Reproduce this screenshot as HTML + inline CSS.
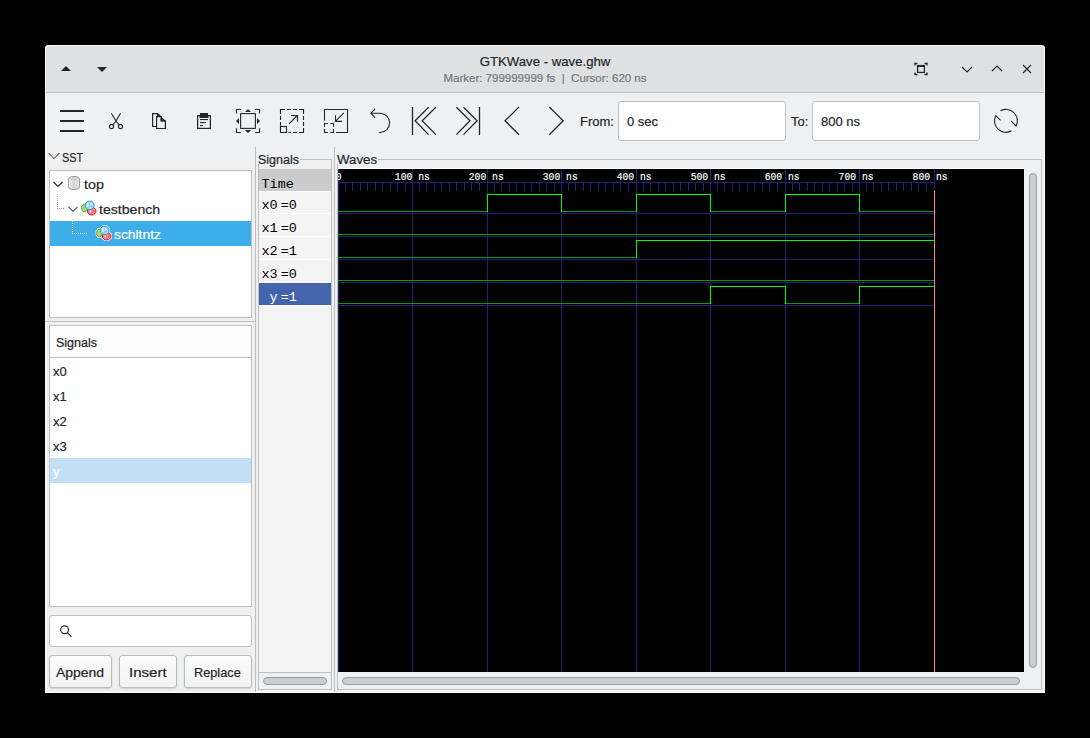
<!DOCTYPE html>
<html><head><meta charset="utf-8">
<style>
html,body{margin:0;padding:0;background:#000;width:1090px;height:738px;overflow:hidden;position:relative}
*{box-sizing:border-box}
.a{position:absolute}
.t{font-family:"Liberation Sans",sans-serif;color:#232629;white-space:pre;line-height:1;-webkit-text-stroke:0.2px currentColor}
.m{font-family:"Liberation Mono",monospace;white-space:pre;line-height:1}
svg{position:absolute;overflow:visible}
.rl{top:2.7px;font-size:9.72px;color:#fff;-webkit-text-stroke:0.15px #fff;transform:scaleY(1.2);transform-origin:0 0}
</style></head><body>
<!-- window -->
<div class="a" style="left:45px;top:45px;width:1000px;height:648px;background:#eff0f1;border-radius:4px 4px 0 0;overflow:hidden">
  <div class="a" style="left:0;top:0;width:1000px;height:47px;background:#dee0e2"></div>
  <div class="a" style="left:0;top:47px;width:1000px;height:1px;background:#b9bbbd"></div>
</div>
<!-- window highlight border -->
<div class="a" style="left:45px;top:45px;width:1000px;height:648px;border:1px solid #fafafa;border-radius:4px 4px 0 0"></div>

<!-- titlebar left arrows -->
<svg style="left:0;top:0" width="1090" height="738">
  <path d="M61 71 L66 66 L71 71 Z" fill="#232629"/>
  <path d="M97 67 L107 67 L102 72 Z" fill="#232629"/>
  <!-- fullscreen icon -->
  <g fill="none" stroke="#232629" stroke-width="1.3">
    <path d="M915 65.5 V63.5 H917.5 M924.5 63.5 H927 V65.5 M927 72.5 V74.5 H924.5 M917.5 74.5 H915 V72.5"/>
  </g>
  <rect x="917.6" y="65.6" width="6.8" height="6.8" fill="none" stroke="#232629" stroke-width="1.3"/>
  <rect x="917" y="65" width="8" height="2" fill="#232629"/>
  <!-- minimize v -->
  <path d="M962 67 L967 72 L972 67" fill="none" stroke="#232629" stroke-width="1.2"/>
  <!-- maximize ^ -->
  <path d="M992 71 L997 66 L1002 71" fill="none" stroke="#232629" stroke-width="1.2"/>
  <!-- close x -->
  <path d="M1023 65 L1031 73 M1031 65 L1023 73" fill="none" stroke="#232629" stroke-width="1.2"/>
</svg>
<div class="a t" style="left:0;width:1090px;text-align:center;top:55px;font-size:13.2px">GTKWave - wave.ghw</div>
<div class="a t" style="left:0;width:1090px;text-align:center;top:73px;font-size:11.5px;color:#74777a">Marker: 799999999 fs  |  Cursor: 620 ns</div>

<!-- toolbar icons -->
<svg style="left:0;top:0" width="1090" height="738">
  <g fill="#232629">
    <rect x="60" y="110" width="24" height="2"/>
    <rect x="60" y="120" width="24" height="2"/>
    <rect x="60" y="130" width="24" height="2"/>
  </g>
  <g fill="none" stroke="#232629" stroke-width="1.1">
    <path d="M111.3 113.3 L116 121 L113.2 124.6 M120.6 113.3 L116 121 L118.8 124.6"/>
    <circle cx="111.5" cy="126.5" r="2.1"/>
    <circle cx="120.5" cy="126.5" r="2.1"/>
  </g>
  <!-- copy -->
  <g fill="none" stroke="#232629" stroke-width="1.2" stroke-linejoin="miter">
    <path d="M156.5 126.5 H152.6 V113.6 H157.4 L160.6 116.4"/>
    <path d="M156.6 128.5 V116.6 H161.2 V120.8 H165.4 V128.5 Z"/>
  </g>
  <path d="M157.5 113 L166 121.3 H160.6 V116 H157 Z" fill="#232629"/>
  <!-- paste -->
  <rect x="197.6" y="115.6" width="12.8" height="12.8" fill="none" stroke="#232629" stroke-width="1.2"/>
  <rect x="200" y="113" width="8" height="3" fill="#232629"/>
  <rect x="199.5" y="115" width="9" height="3" fill="#232629"/>
  <g fill="#232629">
    <rect x="200" y="119" width="8" height="1.1"/>
    <rect x="200" y="122" width="6" height="1.1"/>
    <rect x="200" y="125" width="3" height="1.1"/>
  </g>
  <!-- zoom fit -->
  <g fill="none" stroke="#232629" stroke-width="1.1">
    <path d="M236.5 113.5 V109.5 H240.8 M255.2 109.5 H259.5 V113.5 M259.5 128.3 V132.5 H255.2 M240.8 132.5 H236.5 V128.3"/>
    <rect x="240.6" y="113.6" width="14.8" height="14.8"/>
  </g>
  <g fill="#232629">
    <path d="M248 109 L251 112 H245 Z M248 133 L251 130 H245 Z M236 121 L239 118 V124 Z M260 121 L257 118 V124 Z"/>
  </g>
  <!-- zoom in -->
  <g fill="none" stroke="#232629" stroke-width="1.1">
    <path d="M280.5 114 V109.5 H285 M287 109.5 H291 M293 109.5 H297 M299 109.5 H303.5 V114 M303.5 116 V120 M303.5 122 V126 M303.5 128 V132.5 H299 M297 132.5 H293 M291 132.5 H288.3 M280.5 116 V120 M280.5 122 V125.8"/>
    <rect x="280.5" y="126.5" width="6" height="6"/>
    <path d="M289 123.8 L297.3 115.5 M291 115.5 H297.5 V121.8"/>
  </g>
  <!-- zoom out -->
  <g fill="none" stroke="#232629" stroke-width="1.1">
    <path d="M324.5 120.8 V109.5 H347.5 V132.5 H336"/>
    <path d="M324.5 126.8 V123.5 H328 M330.3 123.5 H333.5 V126.8 M333.5 129 V132.5 H330.3 M328 132.5 H324.5 V129"/>
    <path d="M343.9 112.8 L335.6 121.2 M335.5 115.2 V121.4 H342"/>
  </g>
  <!-- undo -->
  <g fill="none" stroke="#232629" stroke-width="1.1">
    <path d="M375.1 109 L370.8 113.2 L375.1 117.6 M370.8 113.2 H380 A9.65 9.65 0 0 1 380 132.5 H378.8"/>
  </g>
  <!-- skip start / end -->
  <g fill="none" stroke="#232629" stroke-width="1.3">
    <path d="M412.5 107 V135"/>
    <path d="M428.6 107.2 L415.1 120.8 L428.6 134.6 M435.8 107.2 L422.2 120.8 L435.8 134.6"/>
    <path d="M456.4 107.2 L470 120.8 L456.4 134.6 M463.5 107.2 L477.1 120.8 L463.5 134.6"/>
    <path d="M479.5 107 V135"/>
    <path d="M519 107 L505 120.8 L519 134.7"/>
    <path d="M549.3 107 L563.2 120.8 L549.3 134.7"/>
  </g>
  <!-- refresh -->
  <g fill="none" stroke="#232629" stroke-width="1.1">
    <path d="M1000.5 110.8 A11.4 11.4 0 0 1 1016.1 126 L1011.2 121.2"/>
    <path d="M1011.6 130.8 A11.4 11.4 0 0 1 995.8 115.6 L1000.6 120.4"/>
  </g>
</svg>
<div class="a t" style="left:580px;top:115px;font-size:13px">From:</div>
<div class="a" style="left:618px;top:101px;width:168px;height:40px;background:#fff;border:1px solid #bcbebf;border-radius:3px"></div>
<div class="a t" style="left:627px;top:115px;font-size:13px">0 sec</div>
<div class="a t" style="left:791px;top:115px;font-size:13px">To:</div>
<div class="a" style="left:812px;top:101px;width:168px;height:40px;background:#fff;border:1px solid #bcbebf;border-radius:3px"></div>
<div class="a t" style="left:821px;top:115px;font-size:13px">800 ns</div>

<!-- left panel -->
<svg style="left:0;top:0" width="1090" height="738">
  <path d="M48.5 153 L54 158.5 L59.5 153" fill="none" stroke="#232629" stroke-width="1"/>
</svg>
<div class="a t" style="left:62px;top:151px;font-size:13px;transform:scaleX(0.84);transform-origin:0 0">SST</div>
<div class="a" style="left:49px;top:170px;width:203px;height:148px;background:#fff;border:1px solid #bcbebf"></div>
<div class="a" style="left:50px;top:221px;width:201px;height:25px;background:#3daee9"></div>
<div class="a t" style="left:84px;top:178px;font-size:13.2px;transform:scaleX(1.08);transform-origin:0 0">top</div>
<div class="a t" style="left:99px;top:203px;font-size:13.2px;transform:scaleX(1.07);transform-origin:0 0">testbench</div>
<div class="a t" style="left:114px;top:228px;font-size:13.2px;color:#fff;transform:scaleX(1.05);transform-origin:0 0">schltntz</div>
<svg style="left:0;top:0" width="1090" height="738">
  <defs>
    <linearGradient id="cyl" x1="0" x2="1" y1="0" y2="0">
      <stop offset="0" stop-color="#f2f2f2"/><stop offset="0.5" stop-color="#d6d6d6"/><stop offset="1" stop-color="#e6e6e6"/>
    </linearGradient>
    <g id="mod">
      <polygon points="6.08,9.57 4.51,11.79 2.29,11.79 0.72,9.57 0.72,6.43 2.29,4.21 4.51,4.21 6.08,6.43" fill="#fff" stroke="#fff" stroke-width="2.2"/>
      <polygon points="14.86,12.67 12.42,14.89 8.98,14.89 6.54,12.67 6.54,9.53 8.98,7.31 12.42,7.31 14.86,9.53" fill="#fff" stroke="#fff" stroke-width="2.2"/>
      <polygon points="13.04,7.12 10.50,9.56 6.90,9.56 4.36,7.12 4.36,3.68 6.90,1.24 10.50,1.24 13.04,3.68" fill="#fff" stroke="#fff" stroke-width="2.2"/>
      <polygon points="6.08,9.57 4.51,11.79 2.29,11.79 0.72,9.57 0.72,6.43 2.29,4.21 4.51,4.21 6.08,6.43" fill="#a6da78" stroke="#5fae2e" stroke-width="1"/>
      <polygon points="14.86,12.67 12.42,14.89 8.98,14.89 6.54,12.67 6.54,9.53 8.98,7.31 12.42,7.31 14.86,9.53" fill="#f27b85" stroke="#d02838" stroke-width="1"/>
      <rect x="8.6" y="10.2" width="1.6" height="2.4" fill="#fff" opacity="0.85"/>
      <polygon points="13.04,7.12 10.50,9.56 6.90,9.56 4.36,7.12 4.36,3.68 6.90,1.24 10.50,1.24 13.04,3.68" fill="#94d6f2" stroke="#3a9bc9" stroke-width="1"/>
      <rect x="6" y="3.2" width="1.4" height="3.6" fill="#fff" opacity="0.85"/>
      <rect x="9.2" y="3.2" width="1.6" height="2" fill="#fff" opacity="0.6"/>
    </g>
  </defs>
  <path d="M53.5 182 L58 186.5 L62.5 182" fill="none" stroke="#232629" stroke-width="1.1"/>
  <path d="M68.5 206.8 L73 211.3 L77.5 206.8" fill="none" stroke="#4d4d4d" stroke-width="1.1"/>
  <path d="M68.5 179.2 Q68.5 176.5 74 176.5 Q79.5 176.5 79.5 179.2 V186.8 Q79.5 189.5 74 189.5 Q68.5 189.5 68.5 186.8 Z" fill="url(#cyl)" stroke="#999" stroke-width="1"/>
  <path d="M69.5 178.8 Q74 180.6 78.5 178.8" fill="none" stroke="#b5b5b5" stroke-width="0.8"/>
  <use href="#mod" x="81" y="200"/>
  <use href="#mod" x="96" y="225"/>
  <g fill="#a0a0a0">
    <rect x="57" y="196" width="1" height="1"/><rect x="57" y="198" width="1" height="1"/><rect x="57" y="200" width="1" height="1"/>
    <rect x="57" y="202" width="1" height="1"/><rect x="57" y="204" width="1" height="1"/><rect x="57" y="206" width="1" height="1"/>
    <rect x="57" y="208" width="1" height="1"/><rect x="59" y="208" width="1" height="1"/><rect x="61" y="208" width="1" height="1"/><rect x="63" y="208" width="1" height="1"/>
  </g>
  <g fill="#ffffff">
    <rect x="72" y="221" width="1" height="1"/><rect x="72" y="223" width="1" height="1"/><rect x="72" y="225" width="1" height="1"/>
    <rect x="72" y="227" width="1" height="1"/><rect x="72" y="229" width="1" height="1"/><rect x="72" y="231" width="1" height="1"/>
    <rect x="72" y="233" width="1" height="1"/><rect x="74" y="233" width="1" height="1"/><rect x="76" y="233" width="1" height="1"/>
    <rect x="78" y="233" width="1" height="1"/><rect x="80" y="233" width="1" height="1"/><rect x="82" y="233" width="1" height="1"/>
    <rect x="84" y="233" width="1" height="1"/><rect x="86" y="233" width="1" height="1"/>
  </g>
</svg>

<div class="a" style="left:49px;top:325px;width:203px;height:282px;background:#fff;border:1px solid #bcbebf"></div>
<div class="a" style="left:50px;top:326px;width:201px;height:32px;background:#fcfcfc;border-bottom:1px solid #bcbebf"></div>
<div class="a t" style="left:56px;top:337px;font-size:12.5px">Signals</div>
<div class="a" style="left:50px;top:458px;width:201px;height:25px;background:#c1e0f5"></div>
<div class="a t" style="left:53px;top:365px;font-size:13px">x0</div>
<div class="a t" style="left:53px;top:390px;font-size:13px">x1</div>
<div class="a t" style="left:53px;top:415px;font-size:13px">x2</div>
<div class="a t" style="left:53px;top:440px;font-size:13px">x3</div>
<div class="a t" style="left:53px;top:465px;font-size:13px;color:#fff">y</div>

<div class="a" style="left:49px;top:615px;width:203px;height:32px;background:#fff;border:1px solid #bcbebf;border-radius:3px"></div>
<svg style="left:0;top:0" width="1090" height="738">
  <!-- search icon -->
  <g fill="none" stroke="#232629" stroke-width="1.2">
    <circle cx="64.6" cy="629.8" r="3.9"/>
    <path d="M67.4 632.6 L71.5 636.7"/>
  </g>
</svg>
<div class="a" style="left:49px;top:655px;width:63px;height:33px;background:linear-gradient(#fcfcfc,#f2f2f2);border:1px solid #b8babb;border-radius:3px;box-shadow:0 1px 1.5px rgba(0,0,0,0.14)"></div>
<div class="a" style="left:119px;top:655px;width:58px;height:33px;background:linear-gradient(#fcfcfc,#f2f2f2);border:1px solid #b8babb;border-radius:3px;box-shadow:0 1px 1.5px rgba(0,0,0,0.14)"></div>
<div class="a" style="left:184px;top:655px;width:68px;height:33px;background:linear-gradient(#fcfcfc,#f2f2f2);border:1px solid #b8babb;border-radius:3px;box-shadow:0 1px 1.5px rgba(0,0,0,0.14)"></div>
<div class="a t" style="left:56px;top:666px;font-size:13px;transform:scaleX(1.07);transform-origin:0 0">Append</div>
<div class="a t" style="left:129px;top:666px;font-size:13px;transform:scaleX(1.16);transform-origin:0 0">Insert</div>
<div class="a t" style="left:194px;top:666px;font-size:13px;transform:scaleX(0.98);transform-origin:0 0">Replace</div>

<!-- separators -->
<div class="a" style="left:45px;top:321px;width:210px;height:1px;background:#bcbebf"></div>
<div class="a" style="left:255px;top:147px;width:1px;height:545px;background:#bcbebf"></div>
<div class="a" style="left:334px;top:147px;width:1px;height:545px;background:#bcbebf"></div>

<!-- signals column -->
<div class="a" style="left:258px;top:159px;width:74px;height:531px;border:1px solid #bcbebf"></div>
<div class="a" style="left:256px;top:150px;width:44px;height:14px;background:#eff0f1"></div>
<div class="a t" style="left:258px;top:154px;font-size:12.5px">Signals</div>
<div class="a" style="left:259px;top:169px;width:72px;height:503px;background:#f4f4f4"></div>
<div class="a" style="left:259px;top:169px;width:72px;height:22px;background:#cbcbcb"></div>
<div class="a" style="left:259px;top:672px;width:72px;height:1px;background:#bcbebf"></div>

<!-- waves frame -->
<div class="a" style="left:337px;top:159px;width:705px;height:531px;border:1px solid #bcbebf"></div>
<div class="a" style="left:335px;top:150px;width:43px;height:14px;background:#eff0f1"></div>
<div class="a t" style="left:337px;top:154px;font-size:12.5px;transform:scaleX(1.06);transform-origin:0 0">Waves</div>
<div class="a" style="left:338px;top:168px;width:686px;height:1px;background:#fff"></div>
<div class="a" style="left:338px;top:169px;width:686px;height:503px;background:#000"></div>

<!-- signals column rows -->
<div class="a" style="left:259px;top:191px;width:72px;height:1px;background:#fff"></div>
<div class="a" style="left:259px;top:213px;width:72px;height:1px;background:#fff"></div>
<div class="a" style="left:259px;top:236px;width:72px;height:1px;background:#fff"></div>
<div class="a" style="left:259px;top:259px;width:72px;height:1px;background:#fff"></div>
<div class="a" style="left:259px;top:282px;width:72px;height:1px;background:#fff"></div>
<div class="a" style="left:259px;top:283px;width:72px;height:22px;background:#4464ac"></div>
<div class="a" style="left:259px;top:305px;width:72px;height:1px;background:#fff"></div>
<div class="a m" style="left:261.5px;top:178px;font-size:13.5px;color:#000">Time</div>
<div class="a m" style="left:261.5px;top:199px;font-size:13.5px;color:#000">x0</div>
<div class="a m" style="left:280.7px;top:199px;font-size:13.5px;color:#000">=0</div>
<div class="a m" style="left:261.5px;top:222px;font-size:13.5px;color:#000">x1</div>
<div class="a m" style="left:280.7px;top:222px;font-size:13.5px;color:#000">=0</div>
<div class="a m" style="left:261.5px;top:245px;font-size:13.5px;color:#000">x2</div>
<div class="a m" style="left:280.7px;top:245px;font-size:13.5px;color:#000">=1</div>
<div class="a m" style="left:261.5px;top:268px;font-size:13.5px;color:#000">x3</div>
<div class="a m" style="left:280.7px;top:268px;font-size:13.5px;color:#000">=0</div>
<div class="a m" style="left:269.6px;top:291px;font-size:13.5px;color:#fff">y</div>
<div class="a m" style="left:280.7px;top:291px;font-size:13.5px;color:#fff">=1</div>
<!-- scrollbars -->
<div class="a" style="left:263px;top:677px;width:64px;height:8px;background:#cbcccd;border:1px solid #9c9d9e;border-radius:4px"></div>
<div class="a" style="left:342px;top:677px;width:678px;height:8px;background:#cbcccd;border:1px solid #9c9d9e;border-radius:4px"></div>
<div class="a" style="left:1029px;top:173px;width:8px;height:495px;background:#cbcccd;border:1px solid #9c9d9e;border-radius:4px"></div>
<!--WAVES--><div class="a" style="left:338px;top:169px;width:686px;height:503px;overflow:hidden"><svg style="left:-338px;top:-169px" width="1090" height="738" shape-rendering="crispEdges"><rect x="338" y="182" width="597" height="1" fill="#22227a"/><rect x="345" y="183" width="1" height="8" fill="#22227a"/><rect x="352" y="183" width="1" height="8" fill="#22227a"/><rect x="360" y="183" width="1" height="8" fill="#22227a"/><rect x="367" y="183" width="1" height="8" fill="#22227a"/><rect x="375" y="183" width="1" height="8" fill="#22227a"/><rect x="382" y="183" width="1" height="8" fill="#22227a"/><rect x="390" y="183" width="1" height="8" fill="#22227a"/><rect x="397" y="183" width="1" height="8" fill="#22227a"/><rect x="405" y="183" width="1" height="8" fill="#22227a"/><rect x="419" y="183" width="1" height="8" fill="#22227a"/><rect x="426" y="183" width="1" height="8" fill="#22227a"/><rect x="434" y="183" width="1" height="8" fill="#22227a"/><rect x="441" y="183" width="1" height="8" fill="#22227a"/><rect x="449" y="183" width="1" height="8" fill="#22227a"/><rect x="456" y="183" width="1" height="8" fill="#22227a"/><rect x="464" y="183" width="1" height="8" fill="#22227a"/><rect x="471" y="183" width="1" height="8" fill="#22227a"/><rect x="479" y="183" width="1" height="8" fill="#22227a"/><rect x="494" y="183" width="1" height="8" fill="#22227a"/><rect x="501" y="183" width="1" height="8" fill="#22227a"/><rect x="509" y="183" width="1" height="8" fill="#22227a"/><rect x="516" y="183" width="1" height="8" fill="#22227a"/><rect x="524" y="183" width="1" height="8" fill="#22227a"/><rect x="531" y="183" width="1" height="8" fill="#22227a"/><rect x="539" y="183" width="1" height="8" fill="#22227a"/><rect x="546" y="183" width="1" height="8" fill="#22227a"/><rect x="554" y="183" width="1" height="8" fill="#22227a"/><rect x="568" y="183" width="1" height="8" fill="#22227a"/><rect x="575" y="183" width="1" height="8" fill="#22227a"/><rect x="583" y="183" width="1" height="8" fill="#22227a"/><rect x="590" y="183" width="1" height="8" fill="#22227a"/><rect x="598" y="183" width="1" height="8" fill="#22227a"/><rect x="605" y="183" width="1" height="8" fill="#22227a"/><rect x="613" y="183" width="1" height="8" fill="#22227a"/><rect x="620" y="183" width="1" height="8" fill="#22227a"/><rect x="628" y="183" width="1" height="8" fill="#22227a"/><rect x="643" y="183" width="1" height="8" fill="#22227a"/><rect x="650" y="183" width="1" height="8" fill="#22227a"/><rect x="658" y="183" width="1" height="8" fill="#22227a"/><rect x="665" y="183" width="1" height="8" fill="#22227a"/><rect x="673" y="183" width="1" height="8" fill="#22227a"/><rect x="680" y="183" width="1" height="8" fill="#22227a"/><rect x="688" y="183" width="1" height="8" fill="#22227a"/><rect x="695" y="183" width="1" height="8" fill="#22227a"/><rect x="703" y="183" width="1" height="8" fill="#22227a"/><rect x="717" y="183" width="1" height="8" fill="#22227a"/><rect x="724" y="183" width="1" height="8" fill="#22227a"/><rect x="732" y="183" width="1" height="8" fill="#22227a"/><rect x="739" y="183" width="1" height="8" fill="#22227a"/><rect x="747" y="183" width="1" height="8" fill="#22227a"/><rect x="754" y="183" width="1" height="8" fill="#22227a"/><rect x="762" y="183" width="1" height="8" fill="#22227a"/><rect x="769" y="183" width="1" height="8" fill="#22227a"/><rect x="777" y="183" width="1" height="8" fill="#22227a"/><rect x="792" y="183" width="1" height="8" fill="#22227a"/><rect x="799" y="183" width="1" height="8" fill="#22227a"/><rect x="807" y="183" width="1" height="8" fill="#22227a"/><rect x="814" y="183" width="1" height="8" fill="#22227a"/><rect x="822" y="183" width="1" height="8" fill="#22227a"/><rect x="829" y="183" width="1" height="8" fill="#22227a"/><rect x="837" y="183" width="1" height="8" fill="#22227a"/><rect x="844" y="183" width="1" height="8" fill="#22227a"/><rect x="852" y="183" width="1" height="8" fill="#22227a"/><rect x="866" y="183" width="1" height="8" fill="#22227a"/><rect x="873" y="183" width="1" height="8" fill="#22227a"/><rect x="881" y="183" width="1" height="8" fill="#22227a"/><rect x="888" y="183" width="1" height="8" fill="#22227a"/><rect x="896" y="183" width="1" height="8" fill="#22227a"/><rect x="903" y="183" width="1" height="8" fill="#22227a"/><rect x="911" y="183" width="1" height="8" fill="#22227a"/><rect x="918" y="183" width="1" height="8" fill="#22227a"/><rect x="926" y="183" width="1" height="8" fill="#22227a"/><rect x="338" y="169" width="1" height="503" fill="#22227a"/><rect x="412" y="169" width="1" height="503" fill="#22227a"/><rect x="487" y="169" width="1" height="503" fill="#22227a"/><rect x="561" y="169" width="1" height="503" fill="#22227a"/><rect x="636" y="169" width="1" height="503" fill="#22227a"/><rect x="710" y="169" width="1" height="503" fill="#22227a"/><rect x="785" y="169" width="1" height="503" fill="#22227a"/><rect x="859" y="169" width="1" height="503" fill="#22227a"/><rect x="934" y="169" width="1" height="22" fill="#22227a"/><rect x="338" y="213" width="596" height="1" fill="#22227a"/><rect x="338" y="211" width="149" height="1" fill="#00a000"/><rect x="487" y="194" width="74" height="1" fill="#00ff00"/><rect x="487" y="194" width="1" height="18" fill="#00ff00"/><rect x="561" y="211" width="75" height="1" fill="#00a000"/><rect x="561" y="194" width="1" height="18" fill="#00ff00"/><rect x="636" y="194" width="74" height="1" fill="#00ff00"/><rect x="636" y="194" width="1" height="18" fill="#00ff00"/><rect x="710" y="211" width="75" height="1" fill="#00a000"/><rect x="710" y="194" width="1" height="18" fill="#00ff00"/><rect x="785" y="194" width="74" height="1" fill="#00ff00"/><rect x="785" y="194" width="1" height="18" fill="#00ff00"/><rect x="859" y="211" width="76" height="1" fill="#00a000"/><rect x="859" y="194" width="1" height="18" fill="#00ff00"/><rect x="338" y="236" width="596" height="1" fill="#22227a"/><rect x="338" y="234" width="597" height="1" fill="#00a000"/><rect x="338" y="259" width="596" height="1" fill="#22227a"/><rect x="338" y="257" width="298" height="1" fill="#00a000"/><rect x="636" y="240" width="299" height="1" fill="#00ff00"/><rect x="636" y="240" width="1" height="18" fill="#00ff00"/><rect x="338" y="282" width="596" height="1" fill="#22227a"/><rect x="338" y="280" width="597" height="1" fill="#00a000"/><rect x="338" y="305" width="596" height="1" fill="#22227a"/><rect x="338" y="303" width="372" height="1" fill="#00a000"/><rect x="710" y="286" width="75" height="1" fill="#00ff00"/><rect x="710" y="286" width="1" height="18" fill="#00ff00"/><rect x="785" y="303" width="74" height="1" fill="#00a000"/><rect x="785" y="286" width="1" height="18" fill="#00ff00"/><rect x="859" y="286" width="76" height="1" fill="#00ff00"/><rect x="859" y="286" width="1" height="18" fill="#00ff00"/><rect x="934" y="191" width="1" height="481" fill="#ff8080"/></svg><div class="a m rl" style="left:calc(-338px + 335.85px)">0</div><div class="a m rl" style="left:calc(-338px + 394.80px)">100 ns</div><div class="a m rl" style="left:calc(-338px + 468.77px)">200 ns</div><div class="a m rl" style="left:calc(-338px + 542.74px)">300 ns</div><div class="a m rl" style="left:calc(-338px + 616.71px)">400 ns</div><div class="a m rl" style="left:calc(-338px + 690.68px)">500 ns</div><div class="a m rl" style="left:calc(-338px + 764.65px)">600 ns</div><div class="a m rl" style="left:calc(-338px + 838.62px)">700 ns</div><div class="a m rl" style="left:calc(-338px + 912.59px)">800 ns</div></div><!--/WAVES-->
</body></html>
